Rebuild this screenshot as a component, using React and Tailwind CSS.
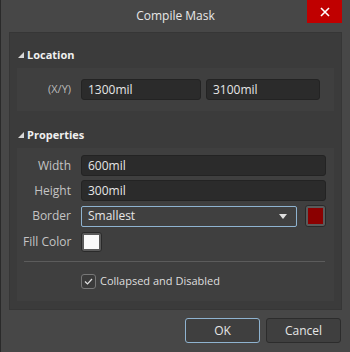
function Field({ value, className = "" }) {
  return (
    <div
      className={`h-[21px] flex items-center pl-[6px] bg-[#2b2b2b] border border-[#232323] rounded-[3px] text-[#e6e6e6] ${className}`}
    >
      {value}
    </div>
  );
}

function Header({ label }) {
  return (
    <div className="flex items-center h-[20px] pl-[8px] gap-[3px] text-[#f0f0f0] font-bold text-[11px]">
      <svg width="6" height="6" viewBox="0 0 6 6">
        <path d="M6 0 L6 6 L0 6 Z" fill="#d8d8d8" />
      </svg>
      <span>{label}</span>
    </div>
  );
}

export default function App() {
  return (
    <div
      className="w-[350px] h-[352px] bg-[#474747] border-l border-[#2a2a2a] flex flex-col text-[12px] overflow-hidden"
      style={{ fontFamily: '"Open Sans", "Noto Sans", sans-serif' }}
    >
      <div className="h-[32px] flex items-start relative">
        <div className="flex-1 text-center pt-[7px] text-[12px] text-[#e8e8e8]">
          Compile Mask
        </div>
        <div className="absolute right-[8px] top-0 w-[35px] h-[23px] bg-[#c00000] flex items-center justify-center">
          <svg width="10" height="10" viewBox="0 0 10 10">
            <path d="M1 1 L9 9 M9 1 L1 9" stroke="#ffffff" strokeWidth="1.6" />
          </svg>
        </div>
      </div>

      <div className="mx-[8px] h-[278px] bg-[#3b3b3b] border border-[#363636] flex flex-col pt-[12px]">
        <Header label="Location" />
        <div className="mx-[7px] mt-[3px] h-[43px] bg-[#3f3f3f] flex items-center gap-[5px] pl-[31px]">
          <span className="text-[#b9b9b9] text-[11px] w-[28px] whitespace-nowrap">(X/Y)</span>
          <Field value="1300mil" className="w-[120px]" />
          <Field value="3100mil" className="w-[114px]" />
        </div>

        <div className="mt-[14px]">
          <Header label="Properties" />
        </div>
        <div className="mx-[7px] mt-[3px] h-[153px] bg-[#3f3f3f] flex flex-col pt-[7px] pl-[6px] pr-[8px]">
          <div className="flex items-center gap-[10px]">
            <span className="w-[48px] text-right text-[#c4c4c4]">Width</span>
            <Field value="600mil" className="flex-1" />
          </div>
          <div className="flex items-center gap-[10px] mt-[4px]">
            <span className="w-[48px] text-right text-[#c4c4c4]">Height</span>
            <Field value="300mil" className="flex-1" />
          </div>
          <div className="flex items-center gap-[10px] mt-[4px]">
            <span className="w-[48px] text-right text-[#c4c4c4]">Border</span>
            <div className="flex-1 h-[21px] flex items-center justify-between pl-[6px] pr-[9px] bg-[#404040] border border-[#8fb3d0] rounded-[2px] text-[#e6e6e6]">
              <span>Smallest</span>
              <svg width="8" height="5" viewBox="0 0 8 5">
                <path d="M0 0 L8 0 L4 5 Z" fill="#e0e0e0" />
              </svg>
            </div>
            <div className="w-[21px] h-[22px] ml-[-2px] rounded-[3px] border border-[#2a2a2a] bg-[#5a5a5a] p-[2px]">
              <div className="w-full h-full bg-[#8b0000]" />
            </div>
          </div>
          <div className="flex items-center gap-[10px] mt-[5px]">
            <span className="w-[48px] text-[#c4c4c4] whitespace-nowrap">Fill Color</span>
            <div className="w-[21px] h-[20px] rounded-[3px] border border-[#2a2a2a] bg-[#5a5a5a] p-[2px]">
              <div className="w-full h-full bg-[#fafafa]" />
            </div>
          </div>
          <div className="mt-[9px] mx-[1px] h-px bg-[#5c5c5c]" />
          <div className="flex items-center gap-[4px] mt-[11px] pl-[58px]">
            <div className="w-[15px] h-[15px] rounded-[3px] border border-[#777] bg-[#3a3a3a] flex items-center justify-center">
              <svg width="9" height="7" viewBox="0 0 9 7">
                <path d="M1 3.5 L3.5 6 L8 1" stroke="#e0e0e0" strokeWidth="1.2" fill="none" />
              </svg>
            </div>
            <span className="text-[#dedede] text-[11px]">Collapsed and Disabled</span>
          </div>
        </div>
      </div>

      <div className="flex justify-end gap-[6px] pr-[9px] mt-[8px]">
        <div className="w-[75px] h-[25px] flex items-center justify-center rounded-[3px] border border-[#8fb3d0] bg-[#3f3f3f] text-[#e6e6e6]">
          OK
        </div>
        <div className="w-[75px] h-[25px] flex items-center justify-center rounded-[3px] border border-[#2c2c2c] bg-[#3f3f3f] text-[#e6e6e6]">
          Cancel
        </div>
      </div>
    </div>
  );
}
